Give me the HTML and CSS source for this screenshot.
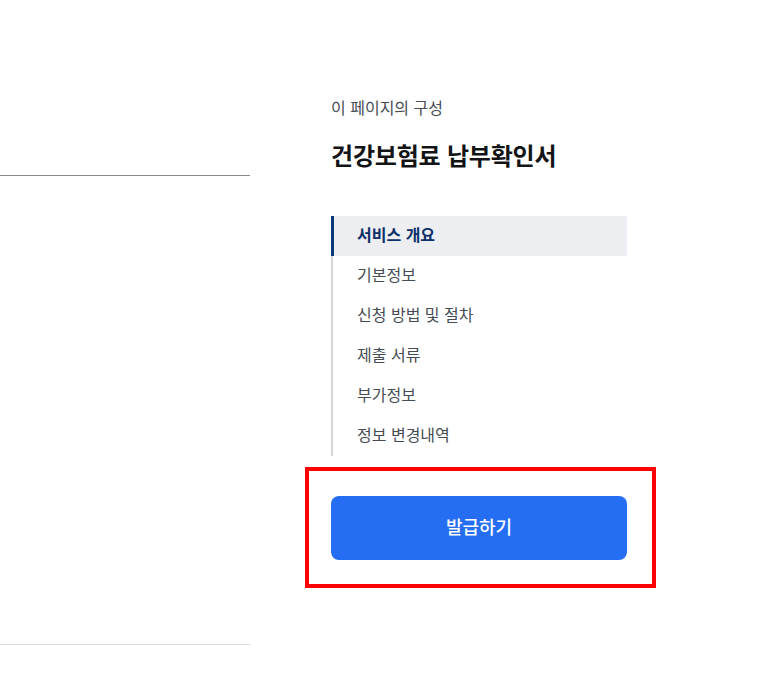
FILE: index.html
```html
<!DOCTYPE html>
<html lang="ko">
<head>
<meta charset="utf-8">
<link rel="stylesheet" href="styles.css">
</head>
<body>
<div class="page">
  <div class="main">
    <div class="main-box"></div>
  </div>
  <aside class="side">
    <p class="side-label">이 페이지의 구성</p>
    <h2 class="side-title">건강보험료 납부확인서</h2>
    <ul class="toc">
      <li class="toc-item active">서비스 개요</li>
      <li class="toc-item">기본정보</li>
      <li class="toc-item">신청 방법 및 절차</li>
      <li class="toc-item">제출 서류</li>
      <li class="toc-item">부가정보</li>
      <li class="toc-item">정보 변경내역</li>
    </ul>
    <div class="action">
      <button class="btn-primary">발급하기</button>
      <div class="highlight"></div>
    </div>
  </aside>
</div>
</body>
</html>
```
FILE: styles.css
```css
* { box-sizing: border-box; }
html, body { margin: 0; padding: 0; background: #fff; }
body {
  font-family: "Noto Sans CJK KR", "Noto Sans", sans-serif;
  color: #1e2124;
  width: 761px;
  height: 696px;
  overflow: hidden;
}
.page {
  display: flex;
  align-items: flex-start;
}
.main {
  width: 250px;
  flex: none;
  padding-top: 175px;
}
.main-box {
  height: 470px;
  border-top: 1px solid #8a8a8a;
  border-bottom: 1px solid #d9d9d9;
}
.side {
  width: 296px;
  margin-left: 81px;
  padding-top: 96px;
}
.side-label {
  margin: 0;
  font-size: 16px;
  line-height: 22px;
  color: #464c53;
}
.side-title {
  margin: 20px 0 0;
  font-size: 24px;
  line-height: 34px;
  font-weight: 700;
  color: #131416;
  letter-spacing: -0.2px;
}
.toc {
  list-style: none;
  margin: 44px 0 0;
  padding: 0;
  border-left: 2px solid #d6d6d6;
}
.toc-item {
  height: 40px;
  line-height: 36px;
  padding-bottom: 4px;
  padding-left: 24px;
  font-size: 16px;
  color: #464c53;
}
.toc-item.active {
  background: #eceef2;
  color: #0b2f68;
  font-weight: 700;
  margin-left: -2px;
  border-left: 3px solid #0b3a7a;
  padding-left: 23px;
}
.action {
  position: relative;
  padding-top: 40px;
}
.btn-primary {
  display: block;
  width: 296px;
  height: 64px;
  border: none;
  border-radius: 8px;
  background: #256ef4;
  color: #fff;
  font-family: inherit;
  font-size: 18px;
  font-weight: 500;
  padding: 0 0 4px;
}
.highlight {
  position: absolute;
  left: -26px;
  top: 11px;
  width: 351px;
  height: 121px;
  border: 4px solid #ff0000;
}
```
